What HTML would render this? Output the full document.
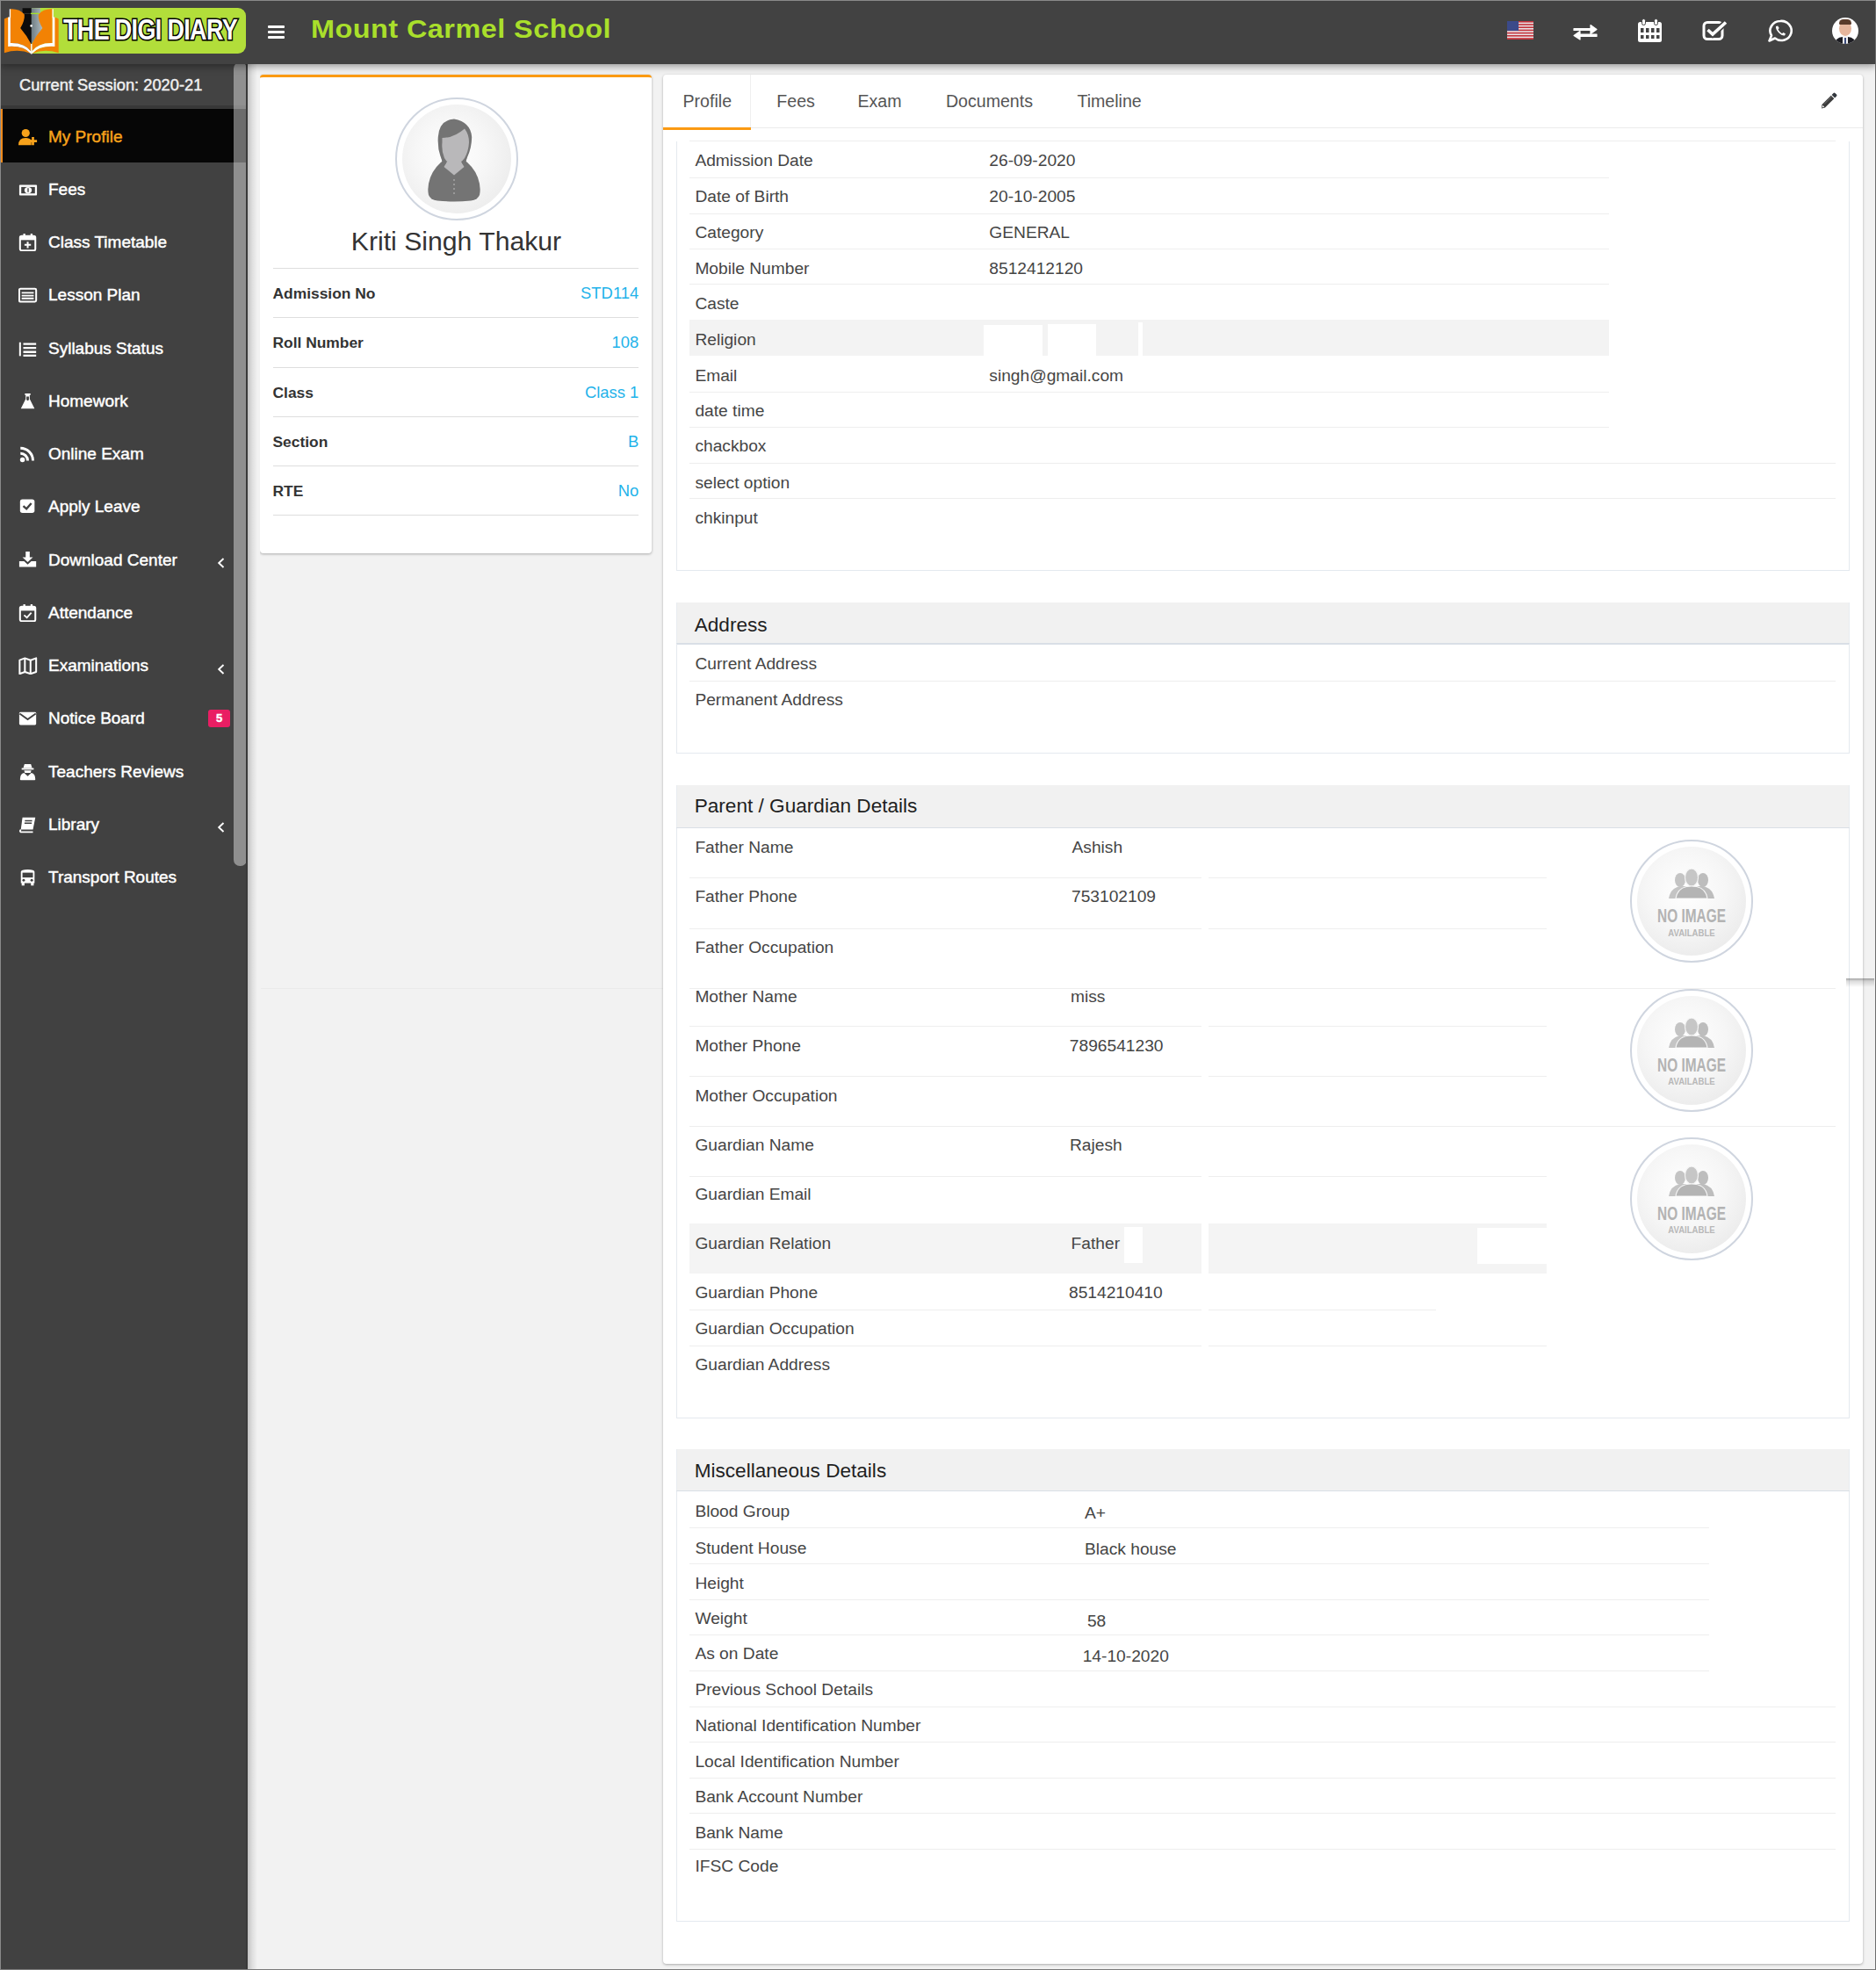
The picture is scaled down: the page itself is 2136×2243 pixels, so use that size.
<!DOCTYPE html>
<html><head><meta charset="utf-8">
<style>
*{box-sizing:border-box;margin:0;padding:0}
html,body{width:2136px;height:2243px;overflow:hidden}
body{position:relative;background:#f2f2f2;font-family:"Liberation Sans",sans-serif;color:#444}
.abs{position:absolute}
#frame{position:absolute;left:0;top:0;width:2136px;height:2243px;border:1px solid #8a8a8a;border-right-color:#6e6e6e;border-bottom-color:#7a7a7a;pointer-events:none;z-index:50}
#hdr{position:absolute;left:0;top:0;width:2136px;height:72.5px;background:#424242;z-index:10;box-shadow:0 2px 9px rgba(0,0,0,.42)}
#side{position:absolute;left:0;top:71px;width:281px;height:2172px;background:#414141;z-index:5}
#sideshadow{position:absolute;left:280px;top:71px;width:16px;height:2172px;background:linear-gradient(to right,#3a3a3a 0,#3a3a3a 2px,#c2c2c2 2px,#dedede 7px,#f2f2f2 13px);z-index:8}
.nav{position:absolute;left:0;width:281px;height:61px;color:#fff;font-weight:normal;font-size:19px;line-height:61px;-webkit-text-stroke:0.45px currentColor}
.nav .t{position:absolute;left:55px;top:0.5px}
.nav svg{position:absolute;left:20.5px;top:21.5px}
.nav.act{background:#060606;color:#f7a21b;border-left:3px solid #f08a1c;width:281px}
.nav.act .t{left:52px}
.nav.act svg{left:18px}
.nav svg.chev{position:absolute;left:247px;top:29px}
</style></head><body>
<div id="frame"></div>

<!-- HEADER -->
<div id="hdr">
  
  <!-- logo -->
  <div class="abs" style="left:36px;top:9px;width:244px;height:52px;background:#b2de3a;border-radius:0 9px 9px 0"></div>
  <svg class="abs" style="left:0;top:0" width="72" height="64" viewBox="0 0 72 64">
    <defs><linearGradient id="nibg" x1="0" x2="1" y1="0" y2="0"><stop offset="0" stop-color="#6f7c82"/><stop offset="1" stop-color="#b4c1c7"/></linearGradient></defs>
    <path d="M25.6 9.2 L35.8 9.2 L35.8 50.3 L22 31 L25.6 16 Z" fill="#0c0c0c"/>
    <path d="M46 9.2 L35.8 9.2 L35.8 50.3 L49.6 31 L46 16 Z" fill="url(#nibg)"/>
    <path d="M35 15.4 L44.8 15.4" stroke="#a6e02a" stroke-width="1.4"/>
    <path d="M25.6 15.4 L35 15.4" stroke="#333" stroke-width="1"/>
    <g fill="#f28204">
      <path d="M4.9 21.5 Q7.5 19.8 10 19.5 L10 52.8 Q27 52 35.3 61 Q21 55 4.9 60.2 Z"/>
      <path d="M11.9 10.3 Q22 9.6 27.8 16.5 Q28.5 23 23.2 32 Q31 41 35.3 50 L35.3 58.5 Q28 48.5 11.9 49 Z"/>
      <path d="M66.7 21.5 Q64.1 19.8 61.6 19.5 L61.6 52.8 Q44.6 52 36.3 61 Q50.6 55 66.7 60.2 Z"/>
      <path d="M59.7 10.3 Q49.6 9.6 43.8 16.5 Q43.1 23 48.4 32 Q40.6 41 36.3 50 L36.3 58.5 Q43.6 48.5 59.7 49 Z"/>
    </g>
    <g fill="#fff">
      <path d="M9.2 19.6 L11.9 19.6 L11.9 49 Q28 48.5 35.3 58.5 L35.3 61.2 Q27 51.8 9.2 53 Z"/>
      <path d="M62.4 19.6 L59.7 19.6 L59.7 49 Q43.6 48.5 36.3 58.5 L36.3 61.2 Q44.6 51.8 62.4 53 Z"/>
      <rect x="35.1" y="50" width="1.4" height="11.5"/><rect x="10.8" y="10.3" width="1.3" height="10"/><rect x="59.5" y="10.3" width="1.3" height="10"/>
      <circle cx="35.6" cy="29.4" r="1.3"/>
    </g>
  </svg>
  <div class="abs" style="left:72px;top:13.5px;font-weight:bold;font-size:32.5px;line-height:40px;color:#fff;letter-spacing:-0.8px;-webkit-text-stroke:3.2px #000;paint-order:stroke fill;transform:scaleX(0.83);transform-origin:left top;white-space:nowrap">THE DIGI DIARY</div>
  <!-- hamburger -->
  <div class="abs" style="left:305px;top:29px;width:19px;height:3px;background:#fff;border-radius:1px"></div>
  <div class="abs" style="left:305px;top:35px;width:19px;height:3px;background:#fff;border-radius:1px"></div>
  <div class="abs" style="left:305px;top:41px;width:19px;height:3px;background:#fff;border-radius:1px"></div>
  <div class="abs" style="left:354px;top:16px;font-weight:bold;font-size:29.5px;line-height:34px;color:#a9df2b;letter-spacing:0.4px;white-space:nowrap;transform:scaleX(1.10);transform-origin:left top">Mount Carmel School</div>

  <!-- header icons -->
  <svg class="abs" style="left:1716px;top:24px" width="30" height="21" viewBox="0 0 30 21">
    <rect width="30" height="21" fill="#e8e3e6"/>
    <g fill="#c4333b"><rect y="0" width="30" height="1.6"/><rect y="3.2" width="30" height="1.6"/><rect y="6.4" width="30" height="1.6"/><rect y="9.6" width="30" height="1.6"/><rect y="12.8" width="30" height="1.6"/><rect y="16" width="30" height="1.6"/><rect y="19.2" width="30" height="1.8"/></g>
    <rect width="13" height="11" fill="#3b4a8a"/>
  </svg>
  <svg class="abs" style="left:1791px;top:27px" width="28" height="19" viewBox="0 0 28 19">
    <path d="M1 5.5 L20 5.5 L20 1.5 L27 6.5 L20 11.5 L20 7.5 L1 7.5Z" fill="#fff" stroke="#fff" stroke-width="1.2" stroke-linejoin="round"/>
    <path d="M27 12 L8 12 L8 8.5 L1 13.5 L8 18 L8 14.5 L27 14.5Z" fill="#fff" stroke="#fff" stroke-width="1.2" stroke-linejoin="round"/>
  </svg>
  <svg class="abs" style="left:1864px;top:21px" width="29" height="28" viewBox="0 0 29 28">
    <rect x="1" y="4" width="27" height="23" rx="2.5" fill="#fff"/>
    <rect x="5.5" y="0.5" width="4" height="7" rx="2" fill="#fff" stroke="#434343" stroke-width="1"/>
    <rect x="19.5" y="0.5" width="4" height="7" rx="2" fill="#fff" stroke="#434343" stroke-width="1"/>
    <g fill="#434343"><rect x="4" y="11" width="3.5" height="5"/><rect x="10" y="11" width="3.5" height="5"/><rect x="16" y="11" width="3.5" height="5"/><rect x="22" y="11" width="3.5" height="5"/>
    <rect x="4" y="19" width="3.5" height="4"/><rect x="10" y="19" width="3.5" height="4"/><rect x="16" y="19" width="3.5" height="4"/><rect x="22" y="19" width="3.5" height="4"/></g>
  </svg>
  <svg class="abs" style="left:1938px;top:23px" width="30" height="23" viewBox="0 0 30 23">
    <rect x="2" y="2.5" width="21" height="19" rx="4" fill="none" stroke="#fff" stroke-width="3"/>
    <path d="M6.5 11 L12 16 L27 2.5" fill="none" stroke="#434343" stroke-width="7"/>
    <path d="M6.5 11 L12 16 L27 2.5" fill="none" stroke="#fff" stroke-width="3.6"/>
  </svg>
  <svg class="abs" style="left:2013px;top:22px" width="28" height="26" viewBox="0 0 28 26">
    <path d="M14 2 A11.5 11 0 1 1 8 21.5 L1.5 24.5 L4 18.5 A11.5 11 0 0 1 14 2Z" fill="none" stroke="#fff" stroke-width="2.6" stroke-linejoin="round"/>
    <path d="M9 8 Q8.5 11 12 15 Q16 19 19 18.5 L20 16.5 L17.5 15 L16 16.2 Q13 14.5 11.5 11.5 L12.7 10 L11.2 7.5Z" fill="#fff"/>
  </svg>
  <div class="abs" style="left:2086px;top:20px;width:30px;height:30px;border-radius:50%;background:#fff;overflow:hidden">
    <div class="abs" style="left:8px;top:4px;width:14px;height:17px;border-radius:50%;background:#e6b69c"></div>
    <div class="abs" style="left:8px;top:2px;width:14px;height:6px;border-radius:7px 7px 2px 2px;background:#5a3b2a"></div>
    <div class="abs" style="left:2px;top:22px;width:26px;height:12px;border-radius:10px 10px 0 0;background:#1c1c22"></div>
    <div class="abs" style="left:12px;top:21px;width:6px;height:9px;background:#f4f4f4"></div>
    <div class="abs" style="left:14px;top:23px;width:2px;height:7px;background:#3a4a7a"></div>
  </div>
</div>

<!-- SIDEBAR -->
<div id="side"></div>
<div id="sideshadow"></div>
<!-- NAV -->
<div class="abs" style="left:0;top:71px;width:281px;height:53px;background:#434343;border-bottom:4px solid #383838;z-index:6"><div class="abs" style="left:22px;top:0;line-height:52px;font-size:18.3px;font-weight:normal;-webkit-text-stroke:0.45px #f0f0f0;color:#f0f0f0;white-space:nowrap">Current Session: 2020-21</div></div>
<div class="nav act" style="top:124.00px;z-index:6"><svg width="22" height="20.2" viewBox="0 0 24 22"><circle cx="9" cy="6" r="5" fill="currentColor"/><path d="M0 21 Q0 12 9 12 Q14 12 16 15 L16 21 Z" fill="currentColor"/><path d="M18 11 L18 21 M13 16 L23 16" stroke="currentColor" stroke-width="3"/></svg><span class="t">My Profile</span></div>
<div class="nav" style="top:184.25px;z-index:6"><svg width="22" height="20.2" viewBox="0 0 24 22"><rect x="1" y="5" width="22" height="13" rx="1" fill="currentColor"/><rect x="3.5" y="7.5" width="17" height="8" fill="#414141"/><ellipse cx="12" cy="11.5" rx="4.5" ry="4" fill="currentColor"/><path d="M12 9 L12 14" stroke="#414141" stroke-width="1.5"/></svg><span class="t">Fees</span></div>
<div class="nav" style="top:244.50px;z-index:6"><svg width="22" height="20.2" viewBox="0 0 24 22"><rect x="2" y="3" width="19" height="18" rx="2" fill="none" stroke="currentColor" stroke-width="2.2"/><rect x="2" y="3" width="19" height="5" fill="currentColor"/><rect x="6" y="0" width="2.5" height="5" fill="currentColor"/><rect x="15" y="0" width="2.5" height="5" fill="currentColor"/><path d="M11.5 10 L11.5 18 M7.5 14 L15.5 14" stroke="currentColor" stroke-width="2.2"/></svg><span class="t">Class Timetable</span></div>
<div class="nav" style="top:304.75px;z-index:6"><svg width="22" height="20.2" viewBox="0 0 24 22"><rect x="1" y="3" width="21" height="16" rx="1.5" fill="none" stroke="currentColor" stroke-width="2.2"/><path d="M4 8 L19 8 M4 11.5 L19 11.5 M4 15 L19 15" stroke="currentColor" stroke-width="2"/></svg><span class="t">Lesson Plan</span></div>
<div class="nav" style="top:365.00px;z-index:6"><svg width="22" height="20.2" viewBox="0 0 24 22"><path d="M2 3 L2 20" stroke="currentColor" stroke-width="2.2"/><path d="M6 5 L22 5 M6 10 L22 10 M6 15 L22 15 M6 19.5 L22 19.5" stroke="currentColor" stroke-width="2.6"/></svg><span class="t">Syllabus Status</span></div>
<div class="nav" style="top:425.25px;z-index:6"><svg width="22" height="20.2" viewBox="0 0 24 22"><path d="M8 1 L15 1 L15 3 L14 3 L14 8 L20 20 L3 20 L9 8 L9 3 L8 3 Z" fill="currentColor"/><path d="M10 5 L13 5 L13 9 L11.5 10 L10 9Z" fill="#414141"/></svg><span class="t">Homework</span></div>
<div class="nav" style="top:485.50px;z-index:6"><svg width="22" height="20.2" viewBox="0 0 24 22"><circle cx="5" cy="18" r="3" fill="currentColor"/><path d="M2.5 10 A9 9 0 0 1 11.5 19" stroke="currentColor" stroke-width="3.2" fill="none"/><path d="M2.5 3.5 A15.5 15.5 0 0 1 18 19" stroke="currentColor" stroke-width="3.2" fill="none"/></svg><span class="t">Online Exam</span></div>
<div class="nav" style="top:545.75px;z-index:6"><svg width="22" height="20.2" viewBox="0 0 24 22"><rect x="2" y="1.5" width="18" height="17" rx="3" fill="currentColor"/><path d="M6 10 L10 13.5 L16 6.5" stroke="#414141" stroke-width="2.6" fill="none"/></svg><span class="t">Apply Leave</span></div>
<div class="nav" style="top:606.00px;z-index:6"><svg width="22" height="20.2" viewBox="0 0 24 22"><path d="M9 0 L14 0 L14 7 L18 7 L11.5 13 L5 7 L9 7 Z" fill="currentColor"/><path d="M1 12 L7 12 L11.5 16 L16 12 L22 12 L22 19 L1 19 Z" fill="currentColor"/></svg><span class="t">Download Center</span><svg class="chev" width="9" height="12" viewBox="0 0 9 12"><path d="M7.5 1 L2.2 6 L7.5 11" stroke="#fff" stroke-width="1.9" fill="none"/></svg></div>
<div class="nav" style="top:666.25px;z-index:6"><svg width="22" height="20.2" viewBox="0 0 24 22"><rect x="2" y="3" width="19" height="18" rx="2" fill="none" stroke="currentColor" stroke-width="2.2"/><rect x="2" y="3" width="19" height="5" fill="currentColor"/><rect x="6" y="0" width="2.5" height="5" fill="currentColor"/><rect x="15" y="0" width="2.5" height="5" fill="currentColor"/><path d="M7 13.5 L10.5 16.5 L16 10.5" stroke="currentColor" stroke-width="2" fill="none"/></svg><span class="t">Attendance</span></div>
<div class="nav" style="top:726.50px;z-index:6"><svg width="22" height="20.2" viewBox="0 0 24 22"><path d="M1.5 4 L8 1.5 L15 4 L22 1.5 L22 18.5 L15 21 L8 18.5 L1.5 21 Z" fill="none" stroke="currentColor" stroke-width="2.2" stroke-linejoin="round"/><path d="M8 1.5 L8 18.5 M15 4 L15 21" stroke="currentColor" stroke-width="2.2"/></svg><span class="t">Examinations</span><svg class="chev" width="9" height="12" viewBox="0 0 9 12"><path d="M7.5 1 L2.2 6 L7.5 11" stroke="#fff" stroke-width="1.9" fill="none"/></svg></div>
<div class="nav" style="top:786.75px;z-index:6"><svg width="22" height="20.2" viewBox="0 0 24 22"><rect x="1" y="3" width="21" height="16" rx="1.5" fill="currentColor"/><path d="M1.5 5 L11.5 12 L21.5 5" stroke="#414141" stroke-width="2" fill="none"/></svg><span class="t">Notice Board</span><div class="abs" style="left:237px;top:21px;width:25px;height:20px;background:#e91e63;border-radius:3px;color:#fff;font-size:13px;line-height:20px;text-align:center;font-weight:bold">5</div></div>
<div class="nav" style="top:847.00px;z-index:6"><svg width="22" height="20.2" viewBox="0 0 24 22"><path d="M6 6 L7.5 1 L15.5 1 L17 6 Z" fill="currentColor"/><rect x="4" y="6" width="15" height="2" fill="currentColor"/><path d="M7 9 L16 9 L15 12 L8 12 Z" fill="currentColor"/><path d="M2 20 Q2 13 7 12 L11.5 16 L16 12 Q21 13 21 20 Q21 21 20 21 L3 21 Q2 21 2 20Z" fill="currentColor"/></svg><span class="t">Teachers Reviews</span></div>
<div class="nav" style="top:907.25px;z-index:6"><svg width="22" height="20.2" viewBox="0 0 24 22"><path d="M5 2 L21 2 L18 17 L3 17 Z" fill="currentColor"/><path d="M3 17 Q1 19 3 20 L18 20" stroke="currentColor" stroke-width="2" fill="none"/><path d="M8 6 L17 6 M7.5 9 L16.5 9" stroke="#414141" stroke-width="1.5"/></svg><span class="t">Library</span><svg class="chev" width="9" height="12" viewBox="0 0 9 12"><path d="M7.5 1 L2.2 6 L7.5 11" stroke="#fff" stroke-width="1.9" fill="none"/></svg></div>
<div class="nav" style="top:967.50px;z-index:6"><svg width="22" height="20.2" viewBox="0 0 24 22"><path d="M3 4 Q3 1 11.5 1 Q20 1 20 4 L20 18 L3 18 Z" fill="currentColor"/><rect x="5" y="5" width="13" height="6" fill="#414141"/><circle cx="6.5" cy="14.5" r="1.6" fill="#414141"/><circle cx="16.5" cy="14.5" r="1.6" fill="#414141"/><rect x="4" y="17" width="3.5" height="4" fill="currentColor"/><rect x="15.5" y="17" width="3.5" height="4" fill="currentColor"/></svg><span class="t">Transport Routes</span></div>
<div class="abs" style="left:266px;top:71px;width:15px;height:915px;background:rgba(255,255,255,0.41);border-radius:7px;z-index:7"></div>



<!-- MAIN -->
<div class="abs" style="left:296.00px;top:85.00px;width:446.00px;height:545.00px;background:#fff;border-top:3px solid #fb9a12;border-radius:4px;box-shadow:0 1px 3px rgba(0,0,0,.3)"></div>
<div class="abs" style="left:449.5px;top:110.5px;width:140px;height:140px;border-radius:50%;border:2px solid #cfd5df;background:#fff"></div>
<div class="abs" style="left:457.5px;top:118.5px;width:124px;height:124px;border-radius:50%;background:radial-gradient(circle at 45% 45%,#ffffff 0,#f7f7f7 40%,#e6e6e6 100%)"></div>
<svg class="abs" style="left:486px;top:134px" width="62" height="96" viewBox="0 0 62 96">
<path d="M21 47 Q9 55 4 68 Q0 79 2 88 Q4 93.5 12 94.5 Q31 96.5 50 94.5 Q58 93.5 60 88 Q62 79 58 68 Q53 55 41 47 Z" fill="#747474"/>
<path d="M31 1.5 Q14 2.5 12.8 22 Q12 34 15.5 44 Q18 50 22 53 L40 53 Q44 50 46.5 44 Q51 34 51.2 22 Q50 5 31 1.5 Z" fill="#747474"/>
<path d="M17.5 23 Q31 23 43 12.5 Q48 19 48 28 Q47.5 38 43 46 Q38 53 31 53 Q24 53 20 46 Q16.5 38 17.5 28 Z" fill="#b9b8ba"/>
<path d="M23 50 L39 50 L42.5 56 L31 65.5 L19.5 56 Z" fill="#b9b8ba"/>
<path d="M19 54 Q17 50 16 44 L22 52Z M43 54 Q45 50 46 44 L40 52Z" fill="#747474"/>
<circle cx="31" cy="71" r="1" fill="#a6a6a6"/><circle cx="31" cy="76" r="1" fill="#a6a6a6"/><circle cx="31" cy="81" r="1" fill="#a6a6a6"/><circle cx="31" cy="86" r="1" fill="#a6a6a6"/>
</svg>
<div class="abs" style="left:119.50px;width:800px;text-align:center;top:256.34px;font-size:30.2px;line-height:38px;font-weight:normal;color:#333;white-space:nowrap;">Kriti Singh Thakur</div>
<div class="abs" style="left:310.50px;top:305.00px;width:416.70px;height:1.00px;background:#dedede;"></div>
<div class="abs" style="left:310.50px;top:322.97px;font-size:17.4px;line-height:22px;font-weight:bold;color:#333;white-space:nowrap;">Admission No</div>
<div class="abs" style="right:1408.80px;top:322.12px;font-size:18.4px;line-height:23px;font-weight:normal;color:#1fb3ea;white-space:nowrap;">STD114</div>
<div class="abs" style="left:310.50px;top:361.28px;width:416.70px;height:1.00px;background:#dedede;"></div>
<div class="abs" style="left:310.50px;top:379.25px;font-size:17.4px;line-height:22px;font-weight:bold;color:#333;white-space:nowrap;">Roll Number</div>
<div class="abs" style="right:1408.80px;top:378.40px;font-size:18.4px;line-height:23px;font-weight:normal;color:#1fb3ea;white-space:nowrap;">108</div>
<div class="abs" style="left:310.50px;top:417.56px;width:416.70px;height:1.00px;background:#dedede;"></div>
<div class="abs" style="left:310.50px;top:435.53px;font-size:17.4px;line-height:22px;font-weight:bold;color:#333;white-space:nowrap;">Class</div>
<div class="abs" style="right:1408.80px;top:434.68px;font-size:18.4px;line-height:23px;font-weight:normal;color:#1fb3ea;white-space:nowrap;">Class 1</div>
<div class="abs" style="left:310.50px;top:473.84px;width:416.70px;height:1.00px;background:#dedede;"></div>
<div class="abs" style="left:310.50px;top:491.81px;font-size:17.4px;line-height:22px;font-weight:bold;color:#333;white-space:nowrap;">Section</div>
<div class="abs" style="right:1408.80px;top:490.96px;font-size:18.4px;line-height:23px;font-weight:normal;color:#1fb3ea;white-space:nowrap;">B</div>
<div class="abs" style="left:310.50px;top:530.12px;width:416.70px;height:1.00px;background:#dedede;"></div>
<div class="abs" style="left:310.50px;top:548.09px;font-size:17.4px;line-height:22px;font-weight:bold;color:#333;white-space:nowrap;">RTE</div>
<div class="abs" style="right:1408.80px;top:547.24px;font-size:18.4px;line-height:23px;font-weight:normal;color:#1fb3ea;white-space:nowrap;">No</div>
<div class="abs" style="left:310.50px;top:586.40px;width:416.70px;height:1.00px;background:#dedede;"></div>
<div class="abs" style="left:755.00px;top:85.00px;width:1366.00px;height:2151.00px;background:#fff;border-radius:4px;box-shadow:0 1px 3px rgba(0,0,0,.3)"></div>
<div class="abs" style="left:755.00px;top:145.00px;width:1366.00px;height:1.00px;background:#ececec;"></div>
<div class="abs" style="left:854.00px;top:85.00px;width:1.00px;height:60.00px;background:#efefef;"></div>
<div class="abs" style="left:755.00px;top:145.00px;width:100.00px;height:3.00px;background:#fb9a12;"></div>
<div class="abs" style="left:777.50px;top:102.71px;font-size:19.6px;line-height:25px;font-weight:normal;color:#555;white-space:nowrap;">Profile</div>
<div class="abs" style="left:884.30px;top:102.71px;font-size:19.6px;line-height:25px;font-weight:normal;color:#555;white-space:nowrap;">Fees</div>
<div class="abs" style="left:976.50px;top:102.71px;font-size:19.6px;line-height:25px;font-weight:normal;color:#555;white-space:nowrap;">Exam</div>
<div class="abs" style="left:1076.90px;top:102.71px;font-size:19.6px;line-height:25px;font-weight:normal;color:#555;white-space:nowrap;">Documents</div>
<div class="abs" style="left:1226.40px;top:102.71px;font-size:19.6px;line-height:25px;font-weight:normal;color:#555;white-space:nowrap;">Timeline</div>
<svg class="abs" style="left:2073px;top:105px" width="20" height="19" viewBox="0 0 20 19"><path d="M1.5 14 L11.8 3.7 L15.3 7.2 L5 17.5 L1 18.5 Z" fill="#3c3c3c"/><path d="M2.3 14.8 L4.2 16.7 L1.6 17.6 Z" fill="#f4f4f4"/><path d="M12.6 2.9 L14.6 0.9 Q15.5 0 16.4 0.9 L18.1 2.6 Q19 3.5 18.1 4.4 L16.1 6.4 Z" fill="#34393f"/><path d="M4 13.5 L12.3 5.2" stroke="#777" stroke-width="0.9"/></svg>
<div class="abs" style="left:770.00px;top:161.00px;width:1.00px;height:489.00px;background:#e4e9ef;"></div>
<div class="abs" style="left:2105.00px;top:161.00px;width:1.00px;height:489.00px;background:#e4e9ef;"></div>
<div class="abs" style="left:770.00px;top:649.00px;width:1336.00px;height:1.00px;background:#e4e9ef;"></div>
<div class="abs" style="left:785.00px;top:364.00px;width:1047.00px;height:41.30px;background:#f3f3f3;"></div>
<div class="abs" style="left:1120.00px;top:370.00px;width:67.00px;height:35.30px;background:#fff;"></div>
<div class="abs" style="left:1193.00px;top:369.00px;width:55.00px;height:36.30px;background:#fff;"></div>
<div class="abs" style="left:1296.00px;top:367.00px;width:5.00px;height:38.30px;background:#fff;"></div>
<div class="abs" style="left:785.00px;top:160.00px;width:1305.00px;height:1.00px;background:#eeeeee;"></div>
<div class="abs" style="left:785.00px;top:201.50px;width:1047.00px;height:1.00px;background:#eeeeee;"></div>
<div class="abs" style="left:785.00px;top:242.70px;width:1047.00px;height:1.00px;background:#eeeeee;"></div>
<div class="abs" style="left:785.00px;top:283.00px;width:1047.00px;height:1.00px;background:#eeeeee;"></div>
<div class="abs" style="left:785.00px;top:323.30px;width:1047.00px;height:1.00px;background:#eeeeee;"></div>
<div class="abs" style="left:785.00px;top:445.60px;width:1047.00px;height:1.00px;background:#eeeeee;"></div>
<div class="abs" style="left:785.00px;top:485.90px;width:1047.00px;height:1.00px;background:#eeeeee;"></div>
<div class="abs" style="left:785.00px;top:527.00px;width:1305.00px;height:1.00px;background:#eeeeee;"></div>
<div class="abs" style="left:785.00px;top:567.40px;width:1305.00px;height:1.00px;background:#eeeeee;"></div>
<div class="abs" style="left:791.40px;top:170.55px;font-size:19.2px;line-height:24px;font-weight:normal;color:#454545;white-space:nowrap;">Admission Date</div>
<div class="abs" style="left:1126.30px;top:170.55px;font-size:19.2px;line-height:24px;font-weight:normal;color:#454545;white-space:nowrap;">26-09-2020</div>
<div class="abs" style="left:791.40px;top:212.05px;font-size:19.2px;line-height:24px;font-weight:normal;color:#454545;white-space:nowrap;">Date of Birth</div>
<div class="abs" style="left:1126.30px;top:212.05px;font-size:19.2px;line-height:24px;font-weight:normal;color:#454545;white-space:nowrap;">20-10-2005</div>
<div class="abs" style="left:791.40px;top:253.25px;font-size:19.2px;line-height:24px;font-weight:normal;color:#454545;white-space:nowrap;">Category</div>
<div class="abs" style="left:1126.30px;top:253.25px;font-size:19.2px;line-height:24px;font-weight:normal;color:#454545;white-space:nowrap;">GENERAL</div>
<div class="abs" style="left:791.40px;top:293.55px;font-size:19.2px;line-height:24px;font-weight:normal;color:#454545;white-space:nowrap;">Mobile Number</div>
<div class="abs" style="left:1126.30px;top:293.55px;font-size:19.2px;line-height:24px;font-weight:normal;color:#454545;white-space:nowrap;">8512412120</div>
<div class="abs" style="left:791.40px;top:333.85px;font-size:19.2px;line-height:24px;font-weight:normal;color:#454545;white-space:nowrap;">Caste</div>
<div class="abs" style="left:791.40px;top:374.55px;font-size:19.2px;line-height:24px;font-weight:normal;color:#454545;white-space:nowrap;">Religion</div>
<div class="abs" style="left:791.40px;top:415.85px;font-size:19.2px;line-height:24px;font-weight:normal;color:#454545;white-space:nowrap;">Email</div>
<div class="abs" style="left:1126.30px;top:415.85px;font-size:19.2px;line-height:24px;font-weight:normal;color:#454545;white-space:nowrap;">singh@gmail.com</div>
<div class="abs" style="left:791.40px;top:456.15px;font-size:19.2px;line-height:24px;font-weight:normal;color:#454545;white-space:nowrap;">date time</div>
<div class="abs" style="left:791.40px;top:496.45px;font-size:19.2px;line-height:24px;font-weight:normal;color:#454545;white-space:nowrap;">chackbox</div>
<div class="abs" style="left:791.40px;top:537.55px;font-size:19.2px;line-height:24px;font-weight:normal;color:#454545;white-space:nowrap;">select option</div>
<div class="abs" style="left:791.40px;top:577.95px;font-size:19.2px;line-height:24px;font-weight:normal;color:#454545;white-space:nowrap;">chkinput</div>
<div class="abs" style="left:770.00px;top:686.00px;width:1336.00px;height:46.00px;background:#f1f1f1;"></div>
<div class="abs" style="left:770.00px;top:732.00px;width:1336.00px;height:1.60px;background:#d9dfe6;"></div>
<div class="abs" style="left:770.00px;top:686.00px;width:1.00px;height:46.00px;background:#e8ecf0;"></div>
<div class="abs" style="left:2105.00px;top:686.00px;width:1.00px;height:46.00px;background:#e8ecf0;"></div>
<div class="abs" style="left:790.70px;top:696.87px;font-size:22.6px;line-height:29px;font-weight:normal;color:#1f1f1f;white-space:nowrap;">Address</div>
<div class="abs" style="left:770.00px;top:733.00px;width:1.00px;height:125.00px;background:#e4e9ef;"></div>
<div class="abs" style="left:2105.00px;top:733.00px;width:1.00px;height:125.00px;background:#e4e9ef;"></div>
<div class="abs" style="left:770.00px;top:857.00px;width:1336.00px;height:1.00px;background:#e4e9ef;"></div>
<div class="abs" style="left:785.00px;top:775.30px;width:1305.00px;height:1.00px;background:#eeeeee;"></div>
<div class="abs" style="left:791.40px;top:744.15px;font-size:19.2px;line-height:24px;font-weight:normal;color:#454545;white-space:nowrap;">Current Address</div>
<div class="abs" style="left:791.40px;top:784.85px;font-size:19.2px;line-height:24px;font-weight:normal;color:#454545;white-space:nowrap;">Permanent Address</div>
<div class="abs" style="left:770.00px;top:894.00px;width:1336.00px;height:47.70px;background:#f1f1f1;"></div>
<div class="abs" style="left:770.00px;top:941.70px;width:1336.00px;height:1.60px;background:#d9dfe6;"></div>
<div class="abs" style="left:770.00px;top:894.00px;width:1.00px;height:47.70px;background:#e8ecf0;"></div>
<div class="abs" style="left:2105.00px;top:894.00px;width:1.00px;height:47.70px;background:#e8ecf0;"></div>
<div class="abs" style="left:790.70px;top:903.47px;font-size:22.6px;line-height:29px;font-weight:normal;color:#1f1f1f;white-space:nowrap;">Parent / Guardian Details</div>
<div class="abs" style="left:770.00px;top:942.70px;width:1.00px;height:672.30px;background:#e4e9ef;"></div>
<div class="abs" style="left:2105.00px;top:942.70px;width:1.00px;height:672.30px;background:#e4e9ef;"></div>
<div class="abs" style="left:770.00px;top:1614.00px;width:1336.00px;height:1.00px;background:#e4e9ef;"></div>
<div class="abs" style="left:785.00px;top:1393.30px;width:583.00px;height:57.10px;background:#f4f4f4;"></div>
<div class="abs" style="left:1376.00px;top:1393.30px;width:385.00px;height:57.10px;background:#f4f4f4;"></div>
<div class="abs" style="left:1280.00px;top:1397.00px;width:21.00px;height:41.00px;background:#fff;"></div>
<div class="abs" style="left:1682.00px;top:1398.00px;width:79.00px;height:41.00px;background:#fff;"></div>
<div class="abs" style="left:785.00px;top:998.50px;width:583.00px;height:1.00px;background:#eeeeee;"></div>
<div class="abs" style="left:1376.00px;top:998.50px;width:385.00px;height:1.00px;background:#eeeeee;"></div>
<div class="abs" style="left:785.00px;top:1056.70px;width:583.00px;height:1.00px;background:#eeeeee;"></div>
<div class="abs" style="left:1376.00px;top:1056.70px;width:385.00px;height:1.00px;background:#eeeeee;"></div>
<div class="abs" style="left:785.00px;top:1167.60px;width:583.00px;height:1.00px;background:#eeeeee;"></div>
<div class="abs" style="left:1376.00px;top:1167.60px;width:385.00px;height:1.00px;background:#eeeeee;"></div>
<div class="abs" style="left:785.00px;top:1224.80px;width:583.00px;height:1.00px;background:#eeeeee;"></div>
<div class="abs" style="left:1376.00px;top:1224.80px;width:385.00px;height:1.00px;background:#eeeeee;"></div>
<div class="abs" style="left:785.00px;top:1338.50px;width:583.00px;height:1.00px;background:#eeeeee;"></div>
<div class="abs" style="left:1376.00px;top:1338.50px;width:385.00px;height:1.00px;background:#eeeeee;"></div>
<div class="abs" style="left:785.00px;top:1491.00px;width:583.00px;height:1.00px;background:#eeeeee;"></div>
<div class="abs" style="left:1376.00px;top:1491.00px;width:259.00px;height:1.00px;background:#eeeeee;"></div>
<div class="abs" style="left:785.00px;top:1531.80px;width:583.00px;height:1.00px;background:#eeeeee;"></div>
<div class="abs" style="left:1376.00px;top:1531.80px;width:385.00px;height:1.00px;background:#eeeeee;"></div>
<div class="abs" style="left:785.00px;top:1281.70px;width:1305.00px;height:1.00px;background:#eeeeee;"></div>
<div class="abs" style="left:785.00px;top:1125.00px;width:1305.00px;height:1.00px;background:#eeeeee;"></div>
<div class="abs" style="left:791.40px;top:952.95px;font-size:19.2px;line-height:24px;font-weight:normal;color:#454545;white-space:nowrap;">Father Name</div>
<div class="abs" style="left:1220.50px;top:952.95px;font-size:19.2px;line-height:24px;font-weight:normal;color:#454545;white-space:nowrap;">Ashish</div>
<div class="abs" style="left:791.40px;top:1009.45px;font-size:19.2px;line-height:24px;font-weight:normal;color:#454545;white-space:nowrap;">Father Phone</div>
<div class="abs" style="left:1220.00px;top:1009.45px;font-size:19.2px;line-height:24px;font-weight:normal;color:#454545;white-space:nowrap;">753102109</div>
<div class="abs" style="left:791.40px;top:1067.25px;font-size:19.2px;line-height:24px;font-weight:normal;color:#454545;white-space:nowrap;">Father Occupation</div>
<div class="abs" style="left:791.40px;top:1122.75px;font-size:19.2px;line-height:24px;font-weight:normal;color:#454545;white-space:nowrap;">Mother Name</div>
<div class="abs" style="left:1219.00px;top:1122.75px;font-size:19.2px;line-height:24px;font-weight:normal;color:#454545;white-space:nowrap;">miss</div>
<div class="abs" style="left:791.40px;top:1179.15px;font-size:19.2px;line-height:24px;font-weight:normal;color:#454545;white-space:nowrap;">Mother Phone</div>
<div class="abs" style="left:1217.80px;top:1179.15px;font-size:19.2px;line-height:24px;font-weight:normal;color:#454545;white-space:nowrap;">7896541230</div>
<div class="abs" style="left:791.40px;top:1235.75px;font-size:19.2px;line-height:24px;font-weight:normal;color:#454545;white-space:nowrap;">Mother Occupation</div>
<div class="abs" style="left:791.40px;top:1292.25px;font-size:19.2px;line-height:24px;font-weight:normal;color:#454545;white-space:nowrap;">Guardian Name</div>
<div class="abs" style="left:1218.00px;top:1292.25px;font-size:19.2px;line-height:24px;font-weight:normal;color:#454545;white-space:nowrap;">Rajesh</div>
<div class="abs" style="left:791.40px;top:1347.65px;font-size:19.2px;line-height:24px;font-weight:normal;color:#454545;white-space:nowrap;">Guardian Email</div>
<div class="abs" style="left:791.40px;top:1403.85px;font-size:19.2px;line-height:24px;font-weight:normal;color:#454545;white-space:nowrap;">Guardian Relation</div>
<div class="abs" style="left:1219.60px;top:1403.85px;font-size:19.2px;line-height:24px;font-weight:normal;color:#454545;white-space:nowrap;">Father</div>
<div class="abs" style="left:791.40px;top:1460.25px;font-size:19.2px;line-height:24px;font-weight:normal;color:#454545;white-space:nowrap;">Guardian Phone</div>
<div class="abs" style="left:1217.00px;top:1460.25px;font-size:19.2px;line-height:24px;font-weight:normal;color:#454545;white-space:nowrap;">8514210410</div>
<div class="abs" style="left:791.40px;top:1500.85px;font-size:19.2px;line-height:24px;font-weight:normal;color:#454545;white-space:nowrap;">Guardian Occupation</div>
<div class="abs" style="left:791.40px;top:1541.75px;font-size:19.2px;line-height:24px;font-weight:normal;color:#454545;white-space:nowrap;">Guardian Address</div>
<div class="abs" style="left:1856.0px;top:956.4px;width:140px;height:140px;border-radius:50%;border:2px solid #cfd5df;background:#fff"></div>
<div class="abs" style="left:1864.0px;top:964.4px;width:124px;height:124px;border-radius:50%;background:radial-gradient(circle at 45% 40%,#ffffff 0,#f6f6f6 45%,#e4e4e4 100%)"></div>
<svg class="abs" style="left:1900.0px;top:989.4px" width="52" height="34" viewBox="0 0 52 34">
<ellipse cx="13" cy="13" rx="6" ry="8" fill="#c4c4c4"/><ellipse cx="39" cy="13" rx="6" ry="8" fill="#bdbdbd"/>
<path d="M0 34 Q2 22 13 20 L20 20 L20 34Z" fill="#c4c4c4"/><path d="M52 34 Q50 22 39 20 L32 20 L32 34Z" fill="#bdbdbd"/>
<ellipse cx="26" cy="10" rx="7.5" ry="10" fill="#c6c6c6" stroke="#f4f4f4" stroke-width="1.2"/>
<path d="M8 34 Q10 20 26 20 Q42 20 44 34Z" fill="#b4b4b4" stroke="#f4f4f4" stroke-width="1.2"/>
</svg>
<div class="abs" style="left:1866.0px;top:1031.4px;width:120px;text-align:center;font-size:22px;line-height:24px;font-weight:bold;color:#b3b3b3;transform:scaleX(0.70);white-space:nowrap">NO IMAGE</div>
<div class="abs" style="left:1866.0px;top:1055.6px;width:120px;text-align:center;font-size:11px;line-height:12px;font-weight:bold;color:#b8b8b8;transform:scaleX(0.87);white-space:nowrap">AVAILABLE</div>
<div class="abs" style="left:1856.0px;top:1126.0px;width:140px;height:140px;border-radius:50%;border:2px solid #cfd5df;background:#fff"></div>
<div class="abs" style="left:1864.0px;top:1134.0px;width:124px;height:124px;border-radius:50%;background:radial-gradient(circle at 45% 40%,#ffffff 0,#f6f6f6 45%,#e4e4e4 100%)"></div>
<svg class="abs" style="left:1900.0px;top:1159.0px" width="52" height="34" viewBox="0 0 52 34">
<ellipse cx="13" cy="13" rx="6" ry="8" fill="#c4c4c4"/><ellipse cx="39" cy="13" rx="6" ry="8" fill="#bdbdbd"/>
<path d="M0 34 Q2 22 13 20 L20 20 L20 34Z" fill="#c4c4c4"/><path d="M52 34 Q50 22 39 20 L32 20 L32 34Z" fill="#bdbdbd"/>
<ellipse cx="26" cy="10" rx="7.5" ry="10" fill="#c6c6c6" stroke="#f4f4f4" stroke-width="1.2"/>
<path d="M8 34 Q10 20 26 20 Q42 20 44 34Z" fill="#b4b4b4" stroke="#f4f4f4" stroke-width="1.2"/>
</svg>
<div class="abs" style="left:1866.0px;top:1201.0px;width:120px;text-align:center;font-size:22px;line-height:24px;font-weight:bold;color:#b3b3b3;transform:scaleX(0.70);white-space:nowrap">NO IMAGE</div>
<div class="abs" style="left:1866.0px;top:1225.2px;width:120px;text-align:center;font-size:11px;line-height:12px;font-weight:bold;color:#b8b8b8;transform:scaleX(0.87);white-space:nowrap">AVAILABLE</div>
<div class="abs" style="left:1856.0px;top:1295.0px;width:140px;height:140px;border-radius:50%;border:2px solid #cfd5df;background:#fff"></div>
<div class="abs" style="left:1864.0px;top:1303.0px;width:124px;height:124px;border-radius:50%;background:radial-gradient(circle at 45% 40%,#ffffff 0,#f6f6f6 45%,#e4e4e4 100%)"></div>
<svg class="abs" style="left:1900.0px;top:1328.0px" width="52" height="34" viewBox="0 0 52 34">
<ellipse cx="13" cy="13" rx="6" ry="8" fill="#c4c4c4"/><ellipse cx="39" cy="13" rx="6" ry="8" fill="#bdbdbd"/>
<path d="M0 34 Q2 22 13 20 L20 20 L20 34Z" fill="#c4c4c4"/><path d="M52 34 Q50 22 39 20 L32 20 L32 34Z" fill="#bdbdbd"/>
<ellipse cx="26" cy="10" rx="7.5" ry="10" fill="#c6c6c6" stroke="#f4f4f4" stroke-width="1.2"/>
<path d="M8 34 Q10 20 26 20 Q42 20 44 34Z" fill="#b4b4b4" stroke="#f4f4f4" stroke-width="1.2"/>
</svg>
<div class="abs" style="left:1866.0px;top:1370.0px;width:120px;text-align:center;font-size:22px;line-height:24px;font-weight:bold;color:#b3b3b3;transform:scaleX(0.70);white-space:nowrap">NO IMAGE</div>
<div class="abs" style="left:1866.0px;top:1394.2px;width:120px;text-align:center;font-size:11px;line-height:12px;font-weight:bold;color:#b8b8b8;transform:scaleX(0.87);white-space:nowrap">AVAILABLE</div>
<div class="abs" style="left:770.00px;top:1650.00px;width:1336.00px;height:46.50px;background:#f1f1f1;"></div>
<div class="abs" style="left:770.00px;top:1696.50px;width:1336.00px;height:1.60px;background:#d9dfe6;"></div>
<div class="abs" style="left:770.00px;top:1650.00px;width:1.00px;height:46.50px;background:#e8ecf0;"></div>
<div class="abs" style="left:2105.00px;top:1650.00px;width:1.00px;height:46.50px;background:#e8ecf0;"></div>
<div class="abs" style="left:790.70px;top:1659.77px;font-size:22.6px;line-height:29px;font-weight:normal;color:#1f1f1f;white-space:nowrap;">Miscellaneous Details</div>
<div class="abs" style="left:770.00px;top:1697.50px;width:1.00px;height:490.50px;background:#e4e9ef;"></div>
<div class="abs" style="left:2105.00px;top:1697.50px;width:1.00px;height:490.50px;background:#e4e9ef;"></div>
<div class="abs" style="left:770.00px;top:2187.00px;width:1336.00px;height:1.00px;background:#e4e9ef;"></div>
<div class="abs" style="left:785.00px;top:1739.00px;width:1161.00px;height:1.00px;background:#eeeeee;"></div>
<div class="abs" style="left:785.00px;top:1779.70px;width:1161.00px;height:1.00px;background:#eeeeee;"></div>
<div class="abs" style="left:785.00px;top:1820.60px;width:1161.00px;height:1.00px;background:#eeeeee;"></div>
<div class="abs" style="left:785.00px;top:1861.00px;width:1161.00px;height:1.00px;background:#eeeeee;"></div>
<div class="abs" style="left:785.00px;top:1902.00px;width:1161.00px;height:1.00px;background:#eeeeee;"></div>
<div class="abs" style="left:785.00px;top:1942.90px;width:1305.00px;height:1.00px;background:#eeeeee;"></div>
<div class="abs" style="left:785.00px;top:1983.30px;width:1305.00px;height:1.00px;background:#eeeeee;"></div>
<div class="abs" style="left:785.00px;top:2023.80px;width:1305.00px;height:1.00px;background:#eeeeee;"></div>
<div class="abs" style="left:785.00px;top:2064.30px;width:1305.00px;height:1.00px;background:#eeeeee;"></div>
<div class="abs" style="left:785.00px;top:2104.70px;width:1305.00px;height:1.00px;background:#eeeeee;"></div>
<div class="abs" style="left:791.40px;top:1709.15px;font-size:19.2px;line-height:24px;font-weight:normal;color:#454545;white-space:nowrap;">Blood Group</div>
<div class="abs" style="left:1235.00px;top:1710.95px;font-size:19.2px;line-height:24px;font-weight:normal;color:#454545;white-space:nowrap;">A+</div>
<div class="abs" style="left:791.40px;top:1750.75px;font-size:19.2px;line-height:24px;font-weight:normal;color:#454545;white-space:nowrap;">Student House</div>
<div class="abs" style="left:1235.00px;top:1752.45px;font-size:19.2px;line-height:24px;font-weight:normal;color:#454545;white-space:nowrap;">Black house</div>
<div class="abs" style="left:791.40px;top:1790.55px;font-size:19.2px;line-height:24px;font-weight:normal;color:#454545;white-space:nowrap;">Height</div>
<div class="abs" style="left:791.40px;top:1831.15px;font-size:19.2px;line-height:24px;font-weight:normal;color:#454545;white-space:nowrap;">Weight</div>
<div class="abs" style="left:1237.90px;top:1833.95px;font-size:19.2px;line-height:24px;font-weight:normal;color:#454545;white-space:nowrap;">58</div>
<div class="abs" style="left:791.40px;top:1871.35px;font-size:19.2px;line-height:24px;font-weight:normal;color:#454545;white-space:nowrap;">As on Date</div>
<div class="abs" style="left:1232.70px;top:1874.45px;font-size:19.2px;line-height:24px;font-weight:normal;color:#454545;white-space:nowrap;">14-10-2020</div>
<div class="abs" style="left:791.40px;top:1911.85px;font-size:19.2px;line-height:24px;font-weight:normal;color:#454545;white-space:nowrap;">Previous School Details</div>
<div class="abs" style="left:791.40px;top:1953.15px;font-size:19.2px;line-height:24px;font-weight:normal;color:#454545;white-space:nowrap;">National Identification Number</div>
<div class="abs" style="left:791.40px;top:1993.65px;font-size:19.2px;line-height:24px;font-weight:normal;color:#454545;white-space:nowrap;">Local Identification Number</div>
<div class="abs" style="left:791.40px;top:2034.15px;font-size:19.2px;line-height:24px;font-weight:normal;color:#454545;white-space:nowrap;">Bank Account Number</div>
<div class="abs" style="left:791.40px;top:2074.55px;font-size:19.2px;line-height:24px;font-weight:normal;color:#454545;white-space:nowrap;">Bank Name</div>
<div class="abs" style="left:791.40px;top:2113.25px;font-size:19.2px;line-height:24px;font-weight:normal;color:#454545;white-space:nowrap;">IFSC Code</div>
<div class="abs" style="left:297.00px;top:1124.50px;width:458.00px;height:1.00px;background:rgba(0,0,0,0.03);"></div>
<div class="abs" style="left:2102.00px;top:1114.00px;width:32.00px;height:10.00px;background:linear-gradient(rgba(0,0,0,0.36),rgba(0,0,0,0.14) 30%,rgba(0,0,0,0) 100%);"></div>
</body></html>
